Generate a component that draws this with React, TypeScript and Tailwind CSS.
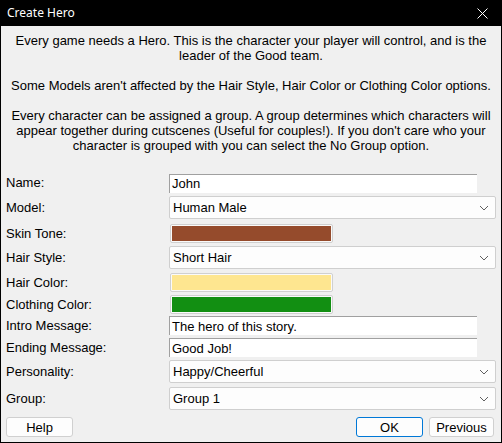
import React from 'react';

const Chevron = () => (
  <svg width="10" height="6" viewBox="0 0 10 6" className="shrink-0">
    <path d="M1 1 L5 5 L9 1" fill="none" stroke="#606060" strokeWidth="1" />
  </svg>
);

const Label = ({ text }: { text: string }) => (
  <div className="w-[168px] shrink-0 pl-[5px]">{text}</div>
);

const TextBox = ({ value }: { value: string }) => (
  <div className="w-[308px] h-[19px] bg-white border-t border-l border-[#a0a0a0] flex items-center pl-[2px] leading-none">
    {value}
  </div>
);

const Combo = ({ value }: { value: string }) => (
  <div className="w-[327px] h-[23px] bg-[#fdfdfd] border border-[#cfcfcf] rounded-[2px] flex items-center justify-between pl-[3px] pr-[6px]">
    <span>{value}</span>
    <Chevron />
  </div>
);

const Swatch = ({ color }: { color: string }) => (
  <div className="ml-[1px] w-[163px] h-[19px] border border-[#d0d0d0] rounded-[2px] p-[1px] bg-[#fafafa]">
    <div className="w-full h-full" style={{ backgroundColor: color }} />
  </div>
);

export default function App() {
  return (
    <div
      className="w-[502px] h-[443px] bg-black flex flex-col text-[13px] text-black"
      style={{ fontFamily: '"Liberation Sans", Arial, sans-serif' }}
    >
      {/* title bar */}
      <div className="h-[26px] shrink-0 flex items-center justify-between pl-[7px] pr-[14px] text-white text-[12px]" style={{ fontFamily: '"Noto Sans", sans-serif' }}>
        <span>Create Hero</span>
        <svg width="11" height="11" viewBox="0 0 11 11">
          <path d="M0.5 0.5 L10.5 10.5 M10.5 0.5 L0.5 10.5" stroke="#ffffff" strokeWidth="1" />
        </svg>
      </div>

      <div className="mx-[1px] mb-[1px] flex-1 bg-[#f0f0f0] flex flex-col">
        {/* intro text */}
        <div className="pt-[7px] px-[4px] text-center leading-[15px] h-[147px]">
          <p>Every game needs a Hero. This is the character your player will control, and is the leader of the Good team.</p>
          <p className="mt-[15px]">Some Models aren't affected by the Hair Style, Hair Color or Clothing Color options.</p>
          <p className="mt-[15px]">Every character can be assigned a group. A group determines which characters will appear together during cutscenes (Useful for couples!). If you don't care who your character is grouped with you can select the No Group option.</p>
        </div>

        <div className="flex flex-col">
          <div className="flex items-center h-[20px]"><Label text="Name:" /><TextBox value="John" /></div>
          <div className="flex items-center h-[23px] mt-[3px]"><Label text="Model:" /><Combo value="Human Male" /></div>
          <div className="flex items-center h-[19px] mt-[5px]"><Label text="Skin Tone:" /><Swatch color="#954b2c" /></div>
          <div className="flex items-center h-[23px] mt-[3px]"><Label text="Hair Style:" /><Combo value="Short Hair" /></div>
          <div className="flex items-center h-[19px] mt-[4px]"><Label text="Hair Color:" /><Swatch color="#fee690" /></div>
          <div className="flex items-center h-[19px] mt-[3px]"><Label text="Clothing Color:" /><Swatch color="#128f12" /></div>
          <div className="flex items-center h-[19px] mt-[2px]"><Label text="Intro Message:" /><TextBox value="The hero of this story." /></div>
          <div className="flex items-center h-[19px] mt-[3px]"><Label text="Ending Message:" /><TextBox value="Good Job!" /></div>
          <div className="flex items-center h-[23px] mt-[3px]"><Label text="Personality:" /><Combo value="Happy/Cheerful" /></div>
          <div className="flex items-center h-[23px] mt-[4px]"><Label text="Group:" /><Combo value="Group 1" /></div>
        </div>

        <div className="flex items-center mt-[7px] px-[5px]">
          <button className="w-[67px] h-[20px] bg-[#fdfdfd] border border-[#d0d0d0] rounded-[3px] leading-none">Help</button>
          <div className="flex-1" />
          <button className="w-[67px] h-[20px] bg-[#fdfdfd] border border-[#0078d7] rounded-[3px] leading-none">OK</button>
          <button className="ml-[6px] w-[65px] h-[20px] bg-[#fdfdfd] border border-[#d0d0d0] rounded-[3px] leading-none">Previous</button>
          <div className="w-[2px]" />
        </div>
      </div>
    </div>
  );
}
